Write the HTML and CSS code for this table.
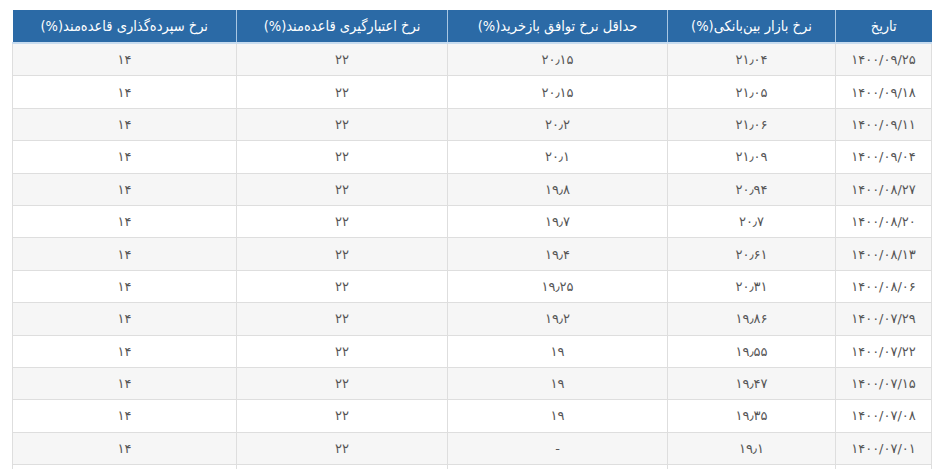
FILE: index.html
```html
<!DOCTYPE html>
<html lang="fa" dir="rtl">
<head>
<meta charset="utf-8">
<link rel="stylesheet" href="styles.css">
</head>
<body>
<div class="wrap">
<table class="rates">
<colgroup>
<col class="c1"><col class="c2"><col class="c3"><col class="c4"><col class="c5">
</colgroup>
<thead>
<tr>
<th>تاریخ</th>
<th>نرخ بازار بین‌بانکی(%)</th>
<th>حداقل نرخ توافق بازخرید(%)</th>
<th>نرخ اعتبارگیری قاعده‌مند(%)</th>
<th>نرخ سپرده‌گذاری قاعده‌مند(%)</th>
</tr>
</thead>
<tbody>
<tr><td>۱۴۰۰/۰۹/۲۵</td><td>۲۱٫۰۴</td><td>۲۰٫۱۵</td><td>۲۲</td><td>۱۴</td></tr>
<tr><td>۱۴۰۰/۰۹/۱۸</td><td>۲۱٫۰۵</td><td>۲۰٫۱۵</td><td>۲۲</td><td>۱۴</td></tr>
<tr><td>۱۴۰۰/۰۹/۱۱</td><td>۲۱٫۰۶</td><td>۲۰٫۲</td><td>۲۲</td><td>۱۴</td></tr>
<tr><td>۱۴۰۰/۰۹/۰۴</td><td>۲۱٫۰۹</td><td>۲۰٫۱</td><td>۲۲</td><td>۱۴</td></tr>
<tr><td>۱۴۰۰/۰۸/۲۷</td><td>۲۰٫۹۴</td><td>۱۹٫۸</td><td>۲۲</td><td>۱۴</td></tr>
<tr><td>۱۴۰۰/۰۸/۲۰</td><td>۲۰٫۷</td><td>۱۹٫۷</td><td>۲۲</td><td>۱۴</td></tr>
<tr><td>۱۴۰۰/۰۸/۱۳</td><td>۲۰٫۶۱</td><td>۱۹٫۴</td><td>۲۲</td><td>۱۴</td></tr>
<tr><td>۱۴۰۰/۰۸/۰۶</td><td>۲۰٫۳۱</td><td>۱۹٫۲۵</td><td>۲۲</td><td>۱۴</td></tr>
<tr><td>۱۴۰۰/۰۷/۲۹</td><td>۱۹٫۸۶</td><td>۱۹٫۲</td><td>۲۲</td><td>۱۴</td></tr>
<tr><td>۱۴۰۰/۰۷/۲۲</td><td>۱۹٫۵۵</td><td>۱۹</td><td>۲۲</td><td>۱۴</td></tr>
<tr><td>۱۴۰۰/۰۷/۱۵</td><td>۱۹٫۴۷</td><td>۱۹</td><td>۲۲</td><td>۱۴</td></tr>
<tr><td>۱۴۰۰/۰۷/۰۸</td><td>۱۹٫۳۵</td><td>۱۹</td><td>۲۲</td><td>۱۴</td></tr>
<tr><td>۱۴۰۰/۰۷/۰۱</td><td>۱۹٫۱</td><td>-</td><td>۲۲</td><td>۱۴</td></tr>
<tr><td>&nbsp;</td><td></td><td></td><td></td><td></td></tr>
</tbody>
</table>
</div>
</body>
</html>
```

FILE: styles.css
```css
html, body {
  margin: 0;
  padding: 0;
  background: #ffffff;
  overflow: hidden;
}
body {
  font-family: "DejaVu Sans", sans-serif;
  height: 469px;
}
.wrap {
  height: 469px;
  overflow: hidden;
  padding: 10px 9px 0 13px;
  box-sizing: border-box;
}
.rates {
  width: 919px;
  border-collapse: collapse;
  table-layout: fixed;
}
.c1 { width: 96px; }
.c2 { width: 168px; }
.c3 { width: 220px; }
.c4 { width: 211px; }
.c5 { width: 224px; }
.rates th {
  background: #2b6aa6;
  color: #ffffff;
  font-family: "DejaVu Sans Condensed", "DejaVu Sans", sans-serif;
  font-weight: normal;
  font-size: 14.5px;
  height: 32px;
  padding: 0;
  border-left: 1px solid #a9c7e3;
  border-bottom: 2px solid #c8dcef;
  text-align: center;
}
.rates th:last-child {
  border-left: none;
}
.rates td {
  height: 31.4px;
  padding: 0;
  text-align: center;
  color: #555555;
  font-size: 13px;
  border: 1px solid #dedede;
}
.rates tbody tr:nth-child(odd) td {
  background: #f6f6f6;
}
.rates tbody tr:nth-child(even) td {
  background: #ffffff;
}
```
